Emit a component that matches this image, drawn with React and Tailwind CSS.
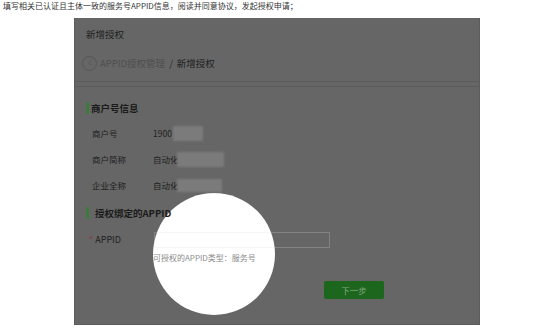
import { ChevronLeft } from 'lucide-react';

const infoRows = [
    { label: '商户号', value: '1900', blur: 'w-[30px] h-[15px] ml-[1px]' },
    { label: '商户简称', value: '自动化', blur: 'w-[47px] h-[15px] -ml-[2px]' },
    { label: '企业全称', value: '自动化', blur: 'w-[45px] h-[13px] -ml-[2px]' },
];

export default function App() {
    return (
        <div className="relative h-[330px] w-[554px] overflow-hidden bg-white font-['Noto_Sans_CJK_SC',sans-serif]">
            {/* Intro line */}
            <p className="h-[12px] pl-[3px] pt-[1px] text-[8px] leading-[10px] text-[#333]">
                填写相关已认证且主体一致的服务号APPID信息，阅读并同意协议，发起授权申请；
            </p>

            {/* Dimmed panel */}
            <div className="relative ml-[74px] mt-[6px] h-[307px] w-[406px] overflow-hidden border-l border-r border-b border-[#5c5c5c] bg-[#666]">
                {/* Spotlight */}
                <div className="absolute left-[78px] top-[175px] h-[122px] w-[122px] rounded-full bg-white" />

                <div className="relative z-10">
                    {/* Title */}
                    <div className="flex h-[32px] items-center pl-[11px] text-[9.5px] text-[#1f1f1f]">新增授权</div>

                    {/* Breadcrumb */}
                    <div className="flex h-[26px] items-center pl-[7px] text-[9.5px]">
                        <span className="flex h-[15px] w-[15px] items-center justify-center rounded-full border border-[#555]">
                            <ChevronLeft size={10} strokeWidth={2} className="text-[#555]" />
                        </span>
                        <span className="ml-[3px] text-[#4f4f4f]">APPID授权管理</span>
                        <span className="mx-[4px] text-[#2a2a2a]">/</span>
                        <span className="text-[#1f1f1f]">新增授权</span>
                    </div>

                    {/* Double divider */}
                    <div className="mt-[5px] h-px w-full bg-[#5b5b5b]" />
                    <div className="mt-[4px] h-px w-full bg-[#5b5b5b]" />

                    {/* Merchant info */}
                    <div className="mt-[13px] flex h-[16px] items-center pl-[11px]">
                        <span className="h-[12px] w-[3px] bg-[#3d7a3d]" />
                        <span className="ml-[2px] text-[9.5px] font-bold text-[#1a1a1a]">商户号信息</span>
                    </div>

                    <div className="mt-[4px]">
                        {infoRows.map((r) => (
                            <div key={r.label} className="flex h-[26px] items-center text-[8.5px] text-[#1e1e1e]">
                                <span className="w-[78px] pl-[17px]">{r.label}</span>
                                <span>{r.value}</span>
                                <span className={`${r.blur} bg-[#7b7b7b] blur-[1px]`} />
                            </div>
                        ))}
                    </div>

                    {/* APPID section */}
                    <div className="mt-[6px] flex h-[18px] items-center pl-[11px]">
                        <span className="h-[12px] w-[3px] bg-[#3d7a3d]" />
                        <span className="ml-[6px] text-[9.5px] font-bold text-[#1a1a1a]">授权绑定的APPID</span>
                    </div>

                    <div className="mt-[10px] flex h-[16px] items-center">
                        <span className="w-[79px] pl-[14px] text-[9px] text-[#1e1e1e]">
                            <span className="text-[#8a3a3a]">*</span> APPID
                        </span>
                        <div className="h-[16px] w-[176px] border border-[#d9d9d9]/25" />
                    </div>

                    <p className="mt-[4px] h-[12px] pl-[78px] text-[8px] leading-[12px] text-[#8a8a8a]">
                        可授权的APPID类型：服务号
                    </p>

                    <div className="mt-[17px] pl-[249px]">
                        <button className="flex h-[18px] w-[60px] items-center justify-center rounded-[2px] bg-[#1d661d] text-[8.5px] text-[#86a886]">
                            下一步
                        </button>
                    </div>
                </div>
            </div>
        </div>
    );
}
